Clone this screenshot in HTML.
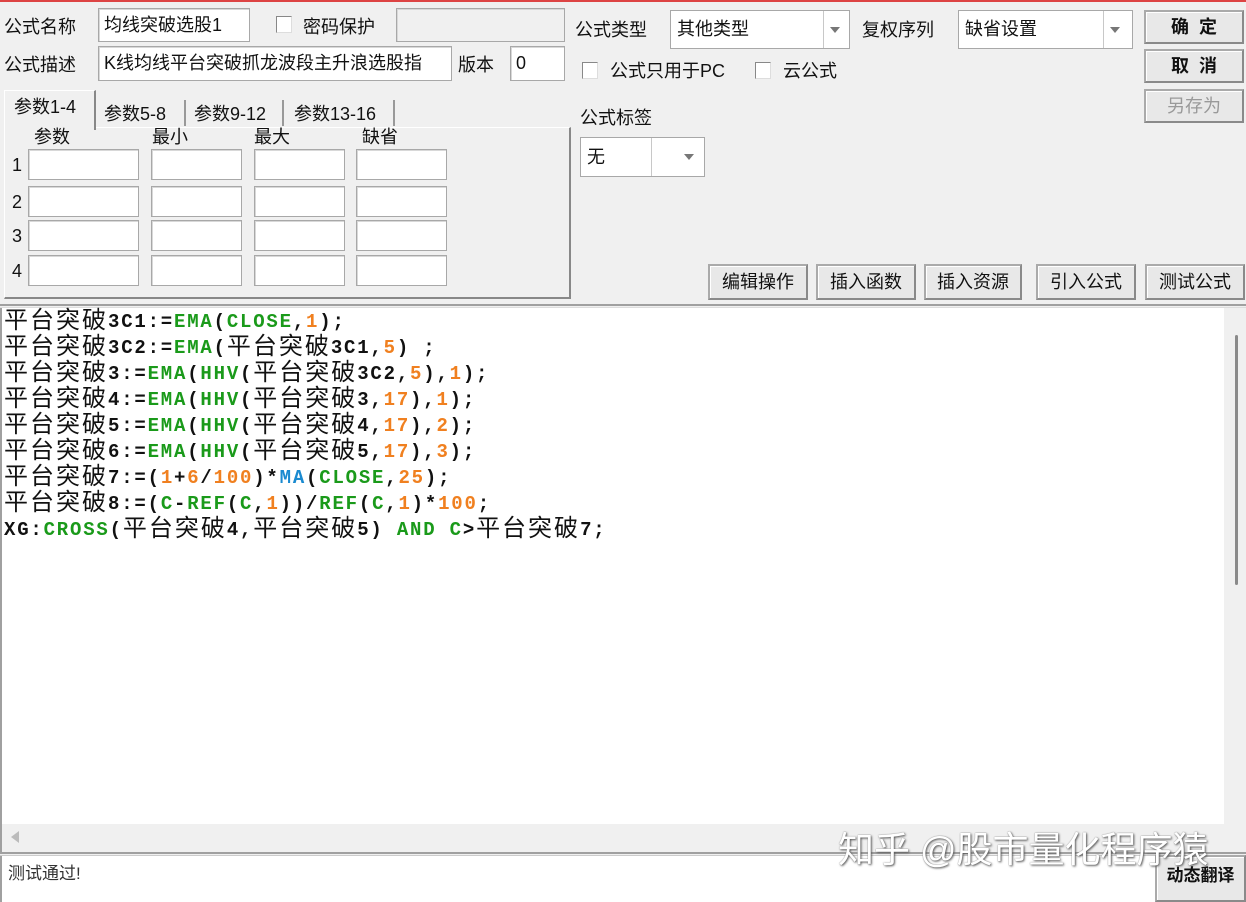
<!DOCTYPE html>
<html><head><meta charset="utf-8"><style>
*{margin:0;padding:0;box-sizing:border-box}
body{width:1246px;height:902px;overflow:hidden;background:#f0f0f0;position:relative;font-family:"Liberation Sans","Noto Sans CJK SC",sans-serif;font-size:18px;color:#111}
.a{position:absolute}
.lbl{position:absolute;font-size:18px;line-height:20px;white-space:nowrap}
.in{position:absolute;background:#fff;border:1px solid #a8a8a8;box-shadow:inset 1px 1px 0 #d8d8d8;font-size:18px;padding-left:5px;white-space:nowrap;overflow:hidden}
.cb{position:absolute;width:16px;height:17px;background:#fff;border:1px solid #888;border-right-color:#ddd;border-bottom-color:#ddd}
.btn{position:absolute;background:#e8e8e8;border:2px solid #8a8a8a;border-top-color:#aaa;border-left-color:#aaa;box-shadow:inset 1px 1px 0 #fff;font-size:18px;text-align:center;white-space:nowrap}
.combo{position:absolute;background:#fff;border:1px solid #a8a8a8;font-size:18px;padding-left:6px;white-space:nowrap}
.combo .sep{position:absolute;top:0;bottom:0;border-left:1px solid #c8c8c8}
.combo .ar{position:absolute;width:0;height:0;border-left:5px solid transparent;border-right:5px solid transparent;border-top:6px solid #777}
.tab{position:absolute;font-size:18px;white-space:nowrap;border-right:2px solid #999;padding-left:6px}
.code{position:absolute;left:4px;top:308px;font-family:"Liberation Mono","Noto Sans CJK SC",monospace;font-weight:bold;font-size:19px;letter-spacing:1.8px;color:#111}
.code div{height:26px;line-height:26px;white-space:pre;overflow:visible}
.code .c{font-family:"Noto Sans CJK SC",sans-serif;font-weight:normal;font-size:24px;letter-spacing:2px;line-height:20px;display:inline-block;vertical-align:-1px}
.g{color:#1a9a1a}.o{color:#f08020}.b{color:#1a8ad0}
</style></head><body>
<div class="a" style="left:0;top:0;width:1246px;height:2px;background:#d44"></div>

<div class="lbl" style="left:4px;top:17px">公式名称</div>
<div class="in" style="left:98px;top:8px;width:152px;height:34px;line-height:32px">均线突破选股1</div>
<div class="cb" style="left:276px;top:16px"></div>
<div class="lbl" style="left:303px;top:17px">密码保护</div>
<div class="in" style="left:396px;top:8px;width:169px;height:34px;background:#f0f0f0"></div>

<div class="lbl" style="left:4px;top:55px">公式描述</div>
<div class="in" style="left:98px;top:46px;width:354px;height:35px;line-height:33px">K线均线平台突破抓龙波段主升浪选股指</div>
<div class="lbl" style="left:458px;top:55px">版本</div>
<div class="in" style="left:510px;top:46px;width:55px;height:35px;line-height:33px">0</div>

<div class="lbl" style="left:575px;top:20px">公式类型</div>
<div class="combo" style="left:670px;top:10px;width:180px;height:39px;line-height:37px">其他类型<div class="sep" style="left:152px"></div><div class="ar" style="left:159px;top:16px"></div></div>
<div class="lbl" style="left:862px;top:20px">复权序列</div>
<div class="combo" style="left:958px;top:10px;width:175px;height:39px;line-height:37px">缺省设置<div class="sep" style="left:144px"></div><div class="ar" style="left:151px;top:16px"></div></div>

<div class="cb" style="left:582px;top:62px"></div>
<div class="lbl" style="left:610px;top:61px">公式只用于PC</div>
<div class="cb" style="left:755px;top:62px"></div>
<div class="lbl" style="left:783px;top:61px">云公式</div>

<div class="lbl" style="left:580px;top:108px">公式标签</div>
<div class="combo" style="left:580px;top:137px;width:125px;height:40px;line-height:38px">无<div class="sep" style="left:70px"></div><div class="ar" style="left:103px;top:16px"></div></div>

<div class="btn" style="left:1144px;top:10px;width:100px;height:34px;line-height:30px;font-weight:bold">确&nbsp;&nbsp;定</div>
<div class="btn" style="left:1144px;top:49px;width:100px;height:34px;line-height:30px;font-weight:bold">取&nbsp;&nbsp;消</div>
<div class="btn" style="left:1144px;top:89px;width:100px;height:34px;line-height:30px;color:#999">另存为</div>

<div class="a" style="left:4px;top:127px;width:567px;height:172px;border:1px solid #fff;border-right:2px solid #888;border-bottom:2px solid #888"></div>
<div class="a" style="left:4px;top:90px;width:92px;height:40px;background:#f0f0f0;border-top:1px solid #fff;border-left:1px solid #fff;border-right:2px solid #888"></div>
<div class="lbl" style="left:14px;top:97px">参数1-4</div>
<div class="tab" style="left:98px;top:100px;width:88px;height:26px">参数5-8</div>
<div class="tab" style="left:188px;top:100px;width:96px;height:26px">参数9-12</div>
<div class="tab" style="left:288px;top:100px;width:107px;height:26px">参数13-16</div>
<div class="lbl" style="left:34px;top:127px">参数</div>
<div class="lbl" style="left:152px;top:127px">最小</div>
<div class="lbl" style="left:254px;top:127px">最大</div>
<div class="lbl" style="left:362px;top:127px">缺省</div>

<div class="lbl" style="left:12px;top:155px">1</div>
<div class="lbl" style="left:12px;top:192px">2</div>
<div class="lbl" style="left:12px;top:226px">3</div>
<div class="lbl" style="left:12px;top:261px">4</div>
<div class="in" style="left:28px;top:149px;width:111px;height:31px"></div><div class="in" style="left:151px;top:149px;width:91px;height:31px"></div><div class="in" style="left:254px;top:149px;width:91px;height:31px"></div><div class="in" style="left:356px;top:149px;width:91px;height:31px"></div>
<div class="in" style="left:28px;top:186px;width:111px;height:31px"></div><div class="in" style="left:151px;top:186px;width:91px;height:31px"></div><div class="in" style="left:254px;top:186px;width:91px;height:31px"></div><div class="in" style="left:356px;top:186px;width:91px;height:31px"></div>
<div class="in" style="left:28px;top:220px;width:111px;height:31px"></div><div class="in" style="left:151px;top:220px;width:91px;height:31px"></div><div class="in" style="left:254px;top:220px;width:91px;height:31px"></div><div class="in" style="left:356px;top:220px;width:91px;height:31px"></div>
<div class="in" style="left:28px;top:255px;width:111px;height:31px"></div><div class="in" style="left:151px;top:255px;width:91px;height:31px"></div><div class="in" style="left:254px;top:255px;width:91px;height:31px"></div><div class="in" style="left:356px;top:255px;width:91px;height:31px"></div>

<div class="btn" style="left:708px;top:264px;width:100px;height:36px;line-height:32px">编辑操作</div>
<div class="btn" style="left:816px;top:264px;width:100px;height:36px;line-height:32px">插入函数</div>
<div class="btn" style="left:924px;top:264px;width:98px;height:36px;line-height:32px">插入资源</div>
<div class="btn" style="left:1036px;top:264px;width:100px;height:36px;line-height:32px">引入公式</div>
<div class="btn" style="left:1145px;top:264px;width:100px;height:36px;line-height:32px">测试公式</div>

<div class="a" style="left:0;top:304px;width:1246px;height:4px;border-top:2px solid #a0a0a0;border-bottom:1px solid #ddd"></div>
<div class="a" style="left:0;top:308px;width:1224px;height:516px;background:#fff;border-left:2px solid #a0a0a0"></div>
<div class="a" style="left:1224px;top:308px;width:22px;height:516px;background:#f0f0f0"></div>
<div class="a" style="left:1235px;top:335px;width:3px;height:250px;background:#8a8a8a;border-radius:2px"></div>
<div class="a" style="left:0;top:824px;width:1224px;height:28px;background:#f0f0f0;border-left:2px solid #a0a0a0"></div>
<div class="a" style="left:11px;top:831px;width:0;height:0;border-top:6px solid transparent;border-bottom:6px solid transparent;border-right:8px solid #bbb"></div>
<div class="code">
<div><span class="c">平台突破</span>3C1:=<span class="g">EMA</span>(<span class="g">CLOSE</span>,<span class="o">1</span>);</div>
<div><span class="c">平台突破</span>3C2:=<span class="g">EMA</span>(<span class="c">平台突破</span>3C1,<span class="o">5</span>) ;</div>
<div><span class="c">平台突破</span>3:=<span class="g">EMA</span>(<span class="g">HHV</span>(<span class="c">平台突破</span>3C2,<span class="o">5</span>),<span class="o">1</span>);</div>
<div><span class="c">平台突破</span>4:=<span class="g">EMA</span>(<span class="g">HHV</span>(<span class="c">平台突破</span>3,<span class="o">17</span>),<span class="o">1</span>);</div>
<div><span class="c">平台突破</span>5:=<span class="g">EMA</span>(<span class="g">HHV</span>(<span class="c">平台突破</span>4,<span class="o">17</span>),<span class="o">2</span>);</div>
<div><span class="c">平台突破</span>6:=<span class="g">EMA</span>(<span class="g">HHV</span>(<span class="c">平台突破</span>5,<span class="o">17</span>),<span class="o">3</span>);</div>
<div><span class="c">平台突破</span>7:=(<span class="o">1</span>+<span class="o">6</span>/<span class="o">100</span>)*<span class="b">MA</span>(<span class="g">CLOSE</span>,<span class="o">25</span>);</div>
<div><span class="c">平台突破</span>8:=(<span class="g">C</span>-<span class="g">REF</span>(<span class="g">C</span>,<span class="o">1</span>))/<span class="g">REF</span>(<span class="g">C</span>,<span class="o">1</span>)*<span class="o">100</span>;</div>
<div>XG:<span class="g">CROSS</span>(<span class="c">平台突破</span>4,<span class="c">平台突破</span>5) <span class="g">AND</span> <span class="g">C</span>&gt;<span class="c">平台突破</span>7;</div>
</div>

<div class="a" style="left:0;top:852px;width:1246px;height:4px;border-top:2px solid #a0a0a0;border-bottom:1px solid #ccc"></div>
<div class="a" style="left:0;top:856px;width:1246px;height:46px;background:#fff;border-left:2px solid #a0a0a0"></div>
<div class="lbl" style="left:8px;top:864px;font-size:17px;color:#333">测试通过!</div>
<div class="btn" style="left:1155px;top:855px;width:91px;height:47px;line-height:38px;font-size:17px;font-weight:bold">动态翻译</div>
<div class="lbl" style="left:838px;top:830px;font-size:36px;line-height:40px;color:#fff;text-shadow:1px 1px 2px #555,0 0 1px #777">知乎 @股市量化程序猿</div>
</body></html>
